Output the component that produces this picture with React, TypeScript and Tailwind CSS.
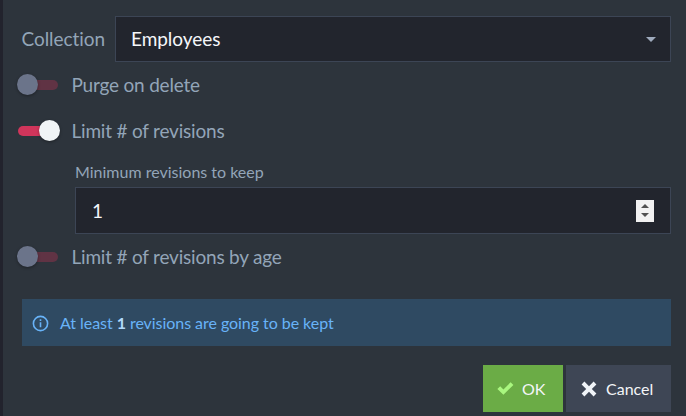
import { useState } from "react";

function Toggle({ label, on, onToggle }: { label: string; on: boolean; onToggle: () => void }) {
  return (
    <button type="button" role="switch" aria-checked={on} onClick={onToggle} className="flex h-[21px] items-center text-left">
      <span className={on ? "flex h-[10px] w-[41px] items-center justify-end rounded-full bg-[#d0355b]" : "flex h-[10px] w-[40px] items-center rounded-full bg-[#603344]"}>
        <span
          className={
            on
              ? "-mr-px size-[21px] shrink-0 rounded-full bg-[#f0f4f6] shadow-[0_1px_3px_rgba(0,0,0,0.35)]"
              : "-ml-px size-[21px] shrink-0 rounded-full bg-[#6b748a] shadow-[0_1px_3px_rgba(0,0,0,0.35)]"
          }
        />
      </span>
      <span className={on ? "ml-[12.5px] text-[19px] leading-[23px] tracking-[-0.2px]" : "ml-[13.5px] text-[19px] leading-[23px] tracking-[-0.2px]"}>{label}</span>
    </button>
  );
}

export default function App() {
  const [purge, setPurge] = useState(false);
  const [limit, setLimit] = useState(true);
  const [age, setAge] = useState(false);
  const [count, setCount] = useState("1");
  const step = (n: number) => setCount(String(Math.max(0, Number(count) + n)));

  return (
    <div className="h-[416px] w-[686px] overflow-hidden border-l-[3px] border-[#22232d] bg-[#2d343c] pt-4 pr-[15px] font-['Lato',sans-serif] text-[#93a5b8]">
      <div className="flex h-[46px] items-center pl-[18.5px]">
        <span className="w-[93.5px] shrink-0 text-[19px] leading-[22px] tracking-[-0.05px]">Collection</span>
        <button type="button" className="flex h-full flex-1 items-center justify-between border border-[#3c4555] bg-[#22252d] pr-[14px] pl-[15px] text-[19px] tracking-[-0.05px] text-[#f5f7fa]">
          Employees
          <svg width="10" height="5" viewBox="0 0 10 5" className="fill-[#9fabbd]">
            <path d="M0 0h10L5 5z" />
          </svg>
        </button>
      </div>
      <div className="mt-3 pl-[15px]">
        <Toggle label="Purge on delete" on={purge} onToggle={() => setPurge(!purge)} />
      </div>
      <div className="mt-[25px] pl-[15px]">
        <Toggle label="Limit # of revisions" on={limit} onToggle={() => setLimit(!limit)} />
      </div>
      <div className="mt-5 pl-[72px]">
        <label htmlFor="min-revisions" className="block h-[26px] text-base leading-[22px]">
          Minimum revisions to keep
        </label>
        <div className="flex h-[47px] items-center border border-[#3c4555] bg-[#22252d] pr-4 pl-4">
          <input
            id="min-revisions"
            inputMode="numeric"
            value={count}
            onChange={(e) => setCount(e.target.value)}
            className="min-w-0 flex-1 bg-transparent pt-px text-[19px] text-[#f5f7fa] outline-none"
          />
          <div className="flex h-[22px] w-[18px] flex-col items-center justify-center gap-[5px] bg-[#f1f1f1]">
            <button type="button" aria-label="Increase" onClick={() => step(1)}>
              <svg width="8" height="4" viewBox="0 0 8 4" className="block fill-[#505050]">
                <path d="M4 0l4 4H0z" />
              </svg>
            </button>
            <button type="button" aria-label="Decrease" onClick={() => step(-1)}>
              <svg width="8" height="4" viewBox="0 0 8 4" className="block fill-[#505050]">
                <path d="M0 0h8L4 4z" />
              </svg>
            </button>
          </div>
        </div>
      </div>
      <div className="mt-3 pl-[15px]">
        <Toggle label="Limit # of revisions by age" on={age} onToggle={() => setAge(!age)} />
      </div>
      <div className="mt-8 ml-[19px] flex h-[47px] items-center bg-[#2f4a62] pl-[10px] text-base text-[#68b3f8]">
        <svg width="17" height="17" viewBox="0 0 17 17" fill="none" className="mt-[2px] mr-[11px] stroke-[#68b3f8]">
          <circle cx="8.5" cy="8.5" r="7.1" strokeWidth="1.6" />
          <path d="M8.5 7.2v5M8.5 4.3v1.6" strokeWidth="1.6" />
        </svg>
        <span className="tracking-[-0.05px]">
          At least <b className="font-bold text-[#b1d9fb]">{count}</b> revisions are going to be kept
        </span>
      </div>
      <div className="mt-[19px] flex h-[47px] justify-end gap-[3px] text-base text-[#f3f5f8]">
        <button type="button" className="flex w-20 items-center bg-[#6bac46] pl-[14px]">
          <svg width="17" height="13" viewBox="0 0 17 13" className="mr-[8px] fill-[#a9f77f]">
            <path d="M.4 7L3.2 4.2l3.2 3.2L13.6.3l2.8 2.8-10 9.6z" />
          </svg>
          OK
        </button>
        <button type="button" className="flex w-[105px] items-center bg-[#3e4655] pl-[15px]">
          <svg width="16" height="16" viewBox="0 0 16 16" className="mr-[9px] fill-[#f0f4f8]">
            <path d="M3.4.6L8 5.2 12.6.6l2.8 2.8L10.8 8l4.6 4.6-2.8 2.8L8 10.8l-4.6 4.6-2.8-2.8L5.2 8 .6 3.4z" />
          </svg>
          Cancel
        </button>
      </div>
    </div>
  );
}
